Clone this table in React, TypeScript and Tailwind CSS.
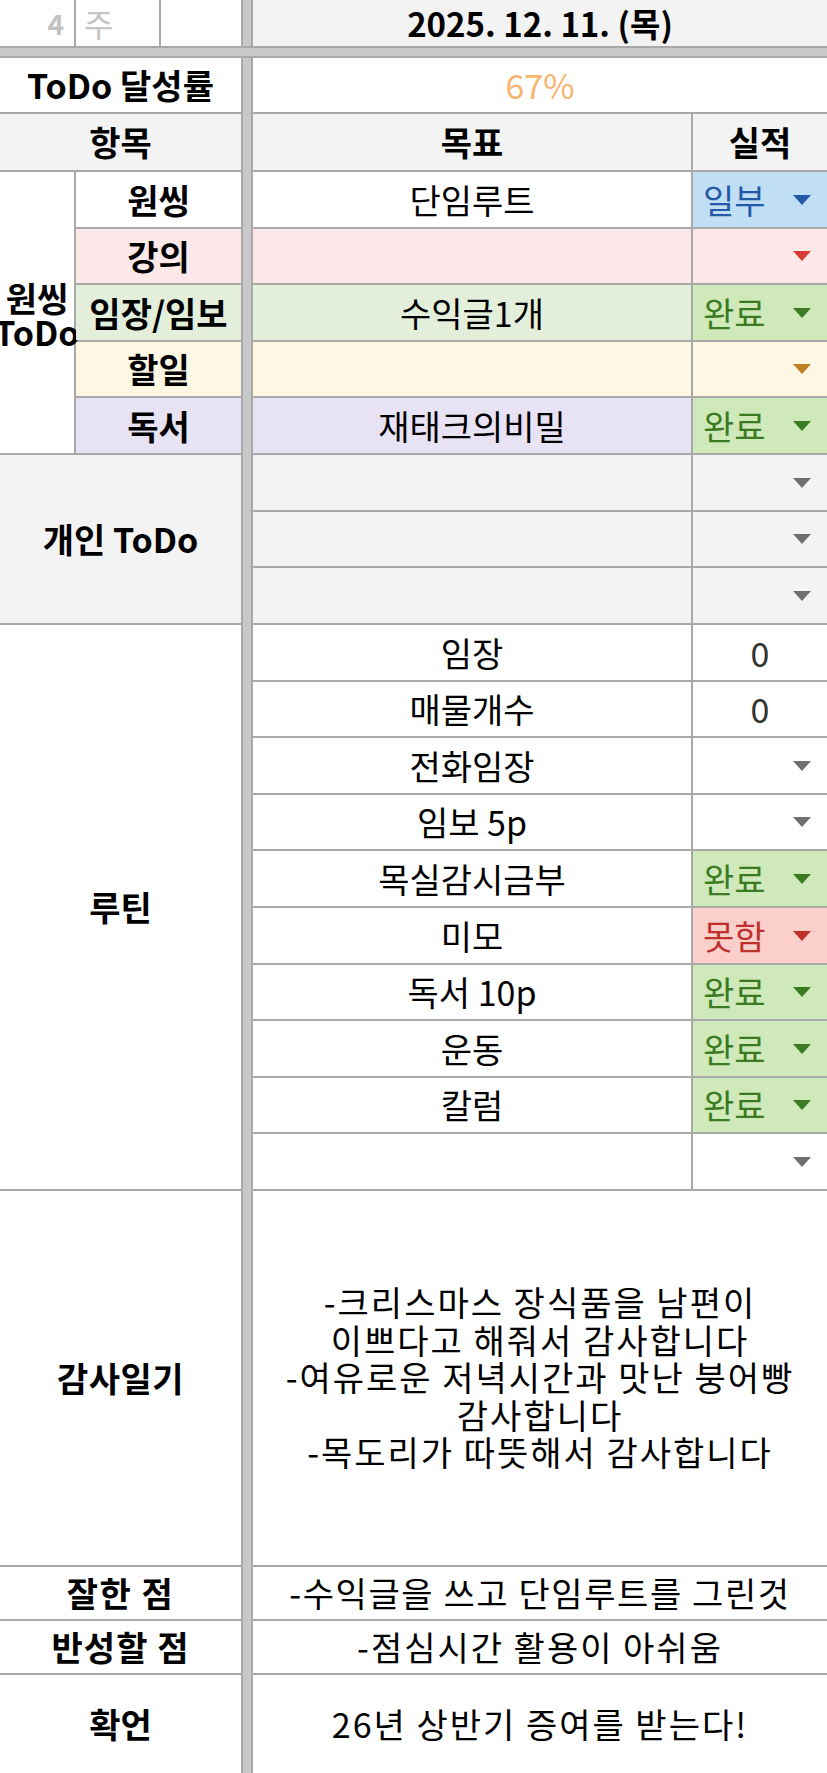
type Tone = "blue" | "green" | "red" | "pink" | "amber" | "gray";

type Result =
  | { type: "pick"; label?: string; tone: Tone }
  | { type: "count"; value: string };

type Row = { name: string; goal: string; bg: string; result: Result };

const tones: Record<Tone, { bg: string; text: string; arrow: string }> = {
  blue: { bg: "bg-[#c0def4]", text: "text-[#2459a8]", arrow: "#2459a8" },
  green: { bg: "bg-[#d0e9bb]", text: "text-[#3a7b22]", arrow: "#3a7b22" },
  red: { bg: "bg-[#fbcfca]", text: "text-[#c0302b]", arrow: "#c0302b" },
  pink: { bg: "bg-[#fce8e8]", text: "text-[#c0302b]", arrow: "#d83a35" },
  amber: { bg: "bg-[#fef7e3]", text: "text-[#9a6a1c]", arrow: "#bf8024" },
  gray: { bg: "bg-[#f3f3f3]", text: "text-[#555555]", arrow: "#6f6f6f" },
};

const oneThing: Row[] = [
  { name: "원씽", goal: "단임루트", bg: "bg-white", result: { type: "pick", label: "일부", tone: "blue" } },
  { name: "강의", goal: "", bg: "bg-[#fce8e8]", result: { type: "pick", tone: "pink" } },
  { name: "임장/임보", goal: "수익글1개", bg: "bg-[#e3efdb]", result: { type: "pick", label: "완료", tone: "green" } },
  { name: "할일", goal: "", bg: "bg-[#fef7e3]", result: { type: "pick", tone: "amber" } },
  { name: "독서", goal: "재태크의비밀", bg: "bg-[#e7e3f5]", result: { type: "pick", label: "완료", tone: "green" } },
];

const personal: Row[] = [1, 2, 3].map(() => ({
  name: "",
  goal: "",
  bg: "bg-[#f3f3f3]",
  result: { type: "pick", tone: "gray" } as Result,
}));

const routine: Row[] = [
  { name: "", goal: "임장", bg: "bg-white", result: { type: "count", value: "0" } },
  { name: "", goal: "매물개수", bg: "bg-white", result: { type: "count", value: "0" } },
  { name: "", goal: "전화임장", bg: "bg-white", result: { type: "pick", tone: "gray" } },
  { name: "", goal: "임보 5p", bg: "bg-white", result: { type: "pick", tone: "gray" } },
  { name: "", goal: "목실감시금부", bg: "bg-white", result: { type: "pick", label: "완료", tone: "green" } },
  { name: "", goal: "미모", bg: "bg-white", result: { type: "pick", label: "못함", tone: "red" } },
  { name: "", goal: "독서 10p", bg: "bg-white", result: { type: "pick", label: "완료", tone: "green" } },
  { name: "", goal: "운동", bg: "bg-white", result: { type: "pick", label: "완료", tone: "green" } },
  { name: "", goal: "칼럼", bg: "bg-white", result: { type: "pick", label: "완료", tone: "green" } },
  { name: "", goal: "", bg: "bg-white", result: { type: "pick", tone: "gray" } },
];

const thanks = [
  "-크리스마스 장식품을 남편이",
  "이쁘다고 해줘서 감사합니다",
  "-여유로운 저녁시간과 맛난 붕어빵",
  "감사합니다",
  "-목도리가 따뜻해서 감사합니다",
];

function ResultCell({ result, rowBg }: { result: Result; rowBg: string }) {
  if (result.type === "count") {
    return (
      <div className={`${rowBg} flex items-center justify-center text-[#333333]`}>
        {result.value}
      </div>
    );
  }
  const tone = tones[result.tone];
  const bg = result.label ? tone.bg : rowBg;
  return (
    <div className={`${bg} flex items-center justify-between pl-[10px] pr-[16px]`}>
      <span className={tone.text}>{result.label}</span>
      <svg width="18" height="10" viewBox="0 0 18 10">
        <path d="M0 0h18L9 10z" fill={tone.arrow} />
      </svg>
    </div>
  );
}

function GoalRows({ rows, withName }: { rows: Row[]; withName: boolean }) {
  return (
    <>
      {rows.map((row, i) => (
        <div key={i} className="contents">
          {withName && (
            <div className={`${row.bg} flex items-center justify-center font-bold`}>{row.name}</div>
          )}
          <div className={`${row.bg} flex items-center justify-center`}>{row.goal}</div>
          <ResultCell result={row.result} rowBg={row.bg} />
        </div>
      ))}
    </>
  );
}

export default function App() {
  return (
    <div className="w-[827px] h-[1773px] overflow-hidden bg-white font-['Noto_Sans_CJK_KR',sans-serif] text-[34px] text-black">
      <div className="grid h-full grid-cols-[74px_165px_8px_438px_134px] grid-rows-[46px_8px_54px_56px_55px_54px_55px_54px_55px_55px_54px_55px_55px_54px_55px_54px_55px_55px_54px_55px_54px_55px_374px_52px_52px_98px] gap-[2px] bg-[#a9a9a9] leading-none">
        {/* thick vertical divider below the top band */}
        <div className="col-start-3 row-start-3 row-span-24 bg-[#c8c8c8]" />

        {/* top row */}
        <div className="col-span-2 grid grid-cols-[74px_83px_1fr] gap-x-[2px] bg-[#a9a9a9]">
          <div className="flex items-center justify-end bg-white pr-[10px] text-[28px] font-bold text-[#c2c2c2]">4</div>
          <div className="flex items-center bg-white pl-[8px] text-[32px] text-[#c4c4c4]">주</div>
          <div className="bg-white" />
        </div>
        <div className="bg-[#c8c8c8]" />
        <div className="col-span-2 flex items-center justify-center bg-[#f3f3f3] text-[33px] font-bold">2025. 12. 11. (목)</div>

        {/* thick horizontal divider */}
        <div className="col-span-5 bg-[#c8c8c8]" />

        <div className="col-span-2 flex items-center justify-center bg-white font-bold">ToDo 달성률</div>
        <div className="col-span-2 flex items-center justify-center bg-white text-[#f7b56f]">67%</div>

        <div className="col-span-2 flex items-center justify-center bg-[#f3f3f3] font-bold">항목</div>
        <div className="flex items-center justify-center bg-[#f3f3f3] font-bold">목표</div>
        <div className="flex items-center justify-center bg-[#f3f3f3] font-bold">실적</div>

        {/* 원씽 ToDo */}
        <div className="row-span-5 flex flex-col items-center justify-center whitespace-nowrap bg-white pt-[4px] font-bold leading-[34px]">
          <span>원씽</span>
          <span>ToDo</span>
        </div>
        <GoalRows rows={oneThing} withName />

        {/* 개인 ToDo */}
        <div className="col-span-2 row-span-3 flex items-center justify-center bg-[#f3f3f3] font-bold">개인 ToDo</div>
        <GoalRows rows={personal} withName={false} />

        {/* 루틴 */}
        <div className="col-span-2 row-span-10 flex items-center justify-center bg-white font-bold">루틴</div>
        <GoalRows rows={routine} withName={false} />

        <div className="col-span-2 flex items-center justify-center bg-white font-bold tracking-[0.5px]">감사일기</div>
        <div className="col-span-2 flex flex-col items-center justify-center bg-white pb-[2px] leading-[37.5px] tracking-[2px]">
          {thanks.map((line) => (
            <span key={line}>{line}</span>
          ))}
        </div>

        <div className="col-span-2 flex items-center justify-center bg-white font-bold tracking-[1.5px]">잘한 점</div>
        <div className="col-span-2 flex items-center justify-center bg-white tracking-[1.6px]">-수익글을 쓰고 단임루트를 그린것</div>

        <div className="col-span-2 flex items-center justify-center bg-white font-bold tracking-[1px]">반성할 점</div>
        <div className="col-span-2 flex items-center justify-center bg-white tracking-[2px]">-점심시간 활용이 아쉬움</div>

        <div className="col-span-2 flex items-center justify-center bg-white font-bold">확언</div>
        <div className="col-span-2 flex items-center justify-center bg-white tracking-[2px]">26년 상반기 증여를 받는다!</div>
      </div>
    </div>
  );
}
